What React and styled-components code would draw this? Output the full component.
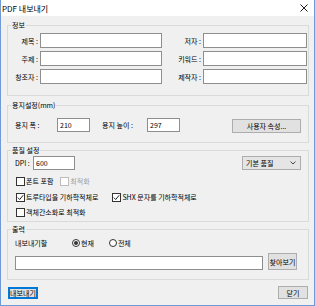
import React from "react";
import styled, { createGlobalStyle } from "styled-components";

const GlobalStyle = createGlobalStyle`
  html, body {
    margin: 0;
    padding: 0;
    background: #fff;
  }
  * {
    box-sizing: border-box;
  }
`;

const FONT = `"Noto Sans CJK KR", "Liberation Sans", sans-serif`;

const Window = styled.div`
  width: 315px;
  height: 306px;
  display: flex;
  flex-direction: column;
  border: 1px solid #6f9ad6;
  border-top: none;
  background: #f0f0f0;
  font-family: ${FONT};
  font-size: 7px;
  color: #000;
  overflow: hidden;
`;

const TitleBar = styled.div`
  height: 16px;
  flex: none;
  display: flex;
  align-items: center;
  justify-content: space-between;
  padding: 0 6px 0 1px;
  background: #fff;
  font-size: 8px;
`;

const Client = styled.div`
  flex: 1;
  display: flex;
  flex-direction: column;
  padding: 4px 5px 0 6px;
`;

const Group = styled.fieldset`
  margin: ${(p) => p.$top || 0}px 0 0 0;
  padding: ${(p) => p.$pad || "3px 2px 10px 0"};
  border: 1px solid #dadada;
  min-width: 0;
`;

const Legend = styled.legend`
  margin-left: 3px;
  padding: 0 1px;
  font-size: 7px;
  line-height: 10px;
`;

const InfoGrid = styled.div`
  display: grid;
  grid-template-columns: 30px 122px 37px 104px;
  column-gap: 2px;
  row-gap: 3px;
  align-items: center;
`;

const Label = styled.span`
  white-space: nowrap;
  text-align: ${(p) => (p.$right ? "right" : "left")};
  color: ${(p) => (p.$disabled ? "#a0a0a0" : "#000")};
`;

const Input = styled.input`
  width: ${(p) => p.$w}px;
  height: ${(p) => p.$h || 15}px;
  margin: 0;
  padding: 0 2px;
  border: 1px solid #8e8e8e;
  background: #fff;
  font-family: ${FONT};
  font-size: 7px;
  outline: none;
`;

const Row = styled.div`
  display: flex;
  align-items: center;
  gap: ${(p) => p.$gap || 0}px;
  margin-top: ${(p) => p.$mt || 0}px;
  padding-left: ${(p) => p.$pl ?? 7}px;
`;

const Spacer = styled.div`
  flex: 1;
`;

const Button = styled.button`
  height: ${(p) => p.$h || 14}px;
  width: ${(p) => p.$w}px;
  margin: 0;
  padding: 0;
  font-family: ${FONT};
  font-size: 7px;
  color: #000;
  background: #e1e1e1;
  border: 1px solid ${(p) => (p.$focus ? "#0078d7" : "#adadad")};
  box-shadow: ${(p) => (p.$focus ? "inset 0 0 0 1px #0078d7" : "none")};
`;

const Combo = styled.div`
  width: 59px;
  height: 14px;
  display: flex;
  align-items: center;
  justify-content: space-between;
  padding: 0 4px 0 3px;
  background: #e5e5e5;
  border: 1px solid #adadad;
`;

const Box = styled.span`
  width: 9px;
  height: 9px;
  flex: none;
  display: inline-flex;
  align-items: center;
  justify-content: center;
  background: #fff;
  border: 1px solid ${(p) => (p.$disabled ? "#bcbcbc" : "#333")};
`;

const Check = styled.label`
  display: inline-flex;
  align-items: center;
  gap: 1px;
  color: ${(p) => (p.$disabled ? "#a0a0a0" : "#000")};
`;

const Radio = styled.span`
  width: 8px;
  height: 8px;
  flex: none;
  border-radius: 50%;
  border: 1px solid #333;
  background: #fff;
  display: inline-flex;
  align-items: center;
  justify-content: center;
  &::after {
    content: "";
    width: 4px;
    height: 4px;
    border-radius: 50%;
    background: ${(p) => (p.$on ? "#333" : "transparent")};
  }
`;

const Footer = styled.div`
  display: flex;
  justify-content: space-between;
  align-items: center;
  padding: 6px 1px 0 1px;
`;

const CheckBox = ({ checked, disabled, children }) => (
  <Check $disabled={disabled}>
    <Box $disabled={disabled}>
      {checked && (
        <svg width="7" height="7" viewBox="0 0 7 7">
          <path d="M0.8 3.6 L2.7 5.5 L6.2 1.2" fill="none" stroke="#222" strokeWidth="1" />
        </svg>
      )}
    </Box>
    {children}
  </Check>
);

export default function App() {
  return (
    <>
      <GlobalStyle />
      <Window>
        <TitleBar>
          <span>PDF 내보내기</span>
          <svg width="8" height="8" viewBox="0 0 8 8">
            <path d="M0.5 0.5 L7.5 7.5 M7.5 0.5 L0.5 7.5" stroke="#222" strokeWidth="1" />
          </svg>
        </TitleBar>
        <Client>
          <Group $pad="3px 2px 11px 0">
            <Legend>정보</Legend>
            <InfoGrid>
              <Label $right>제목 :</Label>
              <Input $w={122} />
              <Label $right>저자 :</Label>
              <Input $w={104} />
              <Label $right>주제 :</Label>
              <Input $w={122} />
              <Label $right>키워드 :</Label>
              <Input $w={104} />
              <Label $right>창조자 :</Label>
              <Input $w={122} />
              <Label $right>제작자 :</Label>
              <Input $w={104} />
            </InfoGrid>
          </Group>

          <Group $top={4} $pad="6px 7px 9px 0">
            <Legend>용지설정(mm)</Legend>
            <Row>
              <Label style={{ width: 42 }}>용지 폭 :</Label>
              <Input $w={33} $h={14} defaultValue="210" />
              <Label style={{ width: 57, paddingLeft: 12 }}>용지 높이 :</Label>
              <Input $w={33} $h={14} defaultValue="297" />
              <Spacer />
              <Button $w={69} style={{ marginTop: 3 }}>사용자 속성...</Button>
            </Row>
          </Group>

          <Group $top={2} $pad="1px 7px 4px 0">
            <Legend>품질 설정</Legend>
            <Row>
              <Label style={{ width: 18 }}>DPI :</Label>
              <Input $w={42} $h={14} defaultValue="600" />
              <Spacer />
              <Combo>
                <span>기본 품질</span>
                <svg width="6" height="4" viewBox="0 0 6 4">
                  <path d="M0.5 0.5 L3 3 L5.5 0.5" fill="none" stroke="#333" strokeWidth="0.9" />
                </svg>
              </Combo>
            </Row>
            <Row $pl={8} $mt={6} $gap={7}>
              <CheckBox>폰트 포함</CheckBox>
              <CheckBox disabled>최적화</CheckBox>
            </Row>
            <Row $pl={8} $mt={6} $gap={14}>
              <CheckBox checked>트루타입을 기하학적체로</CheckBox>
              <CheckBox checked>SHX 문자를 기하학적체로</CheckBox>
            </Row>
            <Row $pl={8} $mt={5}>
              <CheckBox>객체간소화로 최적화</CheckBox>
            </Row>
          </Group>

          <Group $top={2} $pad="4px 11px 9px 0">
            <Legend>출력</Legend>
            <Row>
              <Label style={{ width: 57 }}>내보내기할</Label>
              <Check>
                <Radio $on />
                현재
              </Check>
              <Check style={{ marginLeft: 15 }}>
                <Radio />
                전체
              </Check>
            </Row>
            <Row $mt={5} $gap={5}>
              <Input $w={248} $h={14} style={{ marginTop: 2 }} />
              <Button $w={29} $h={17}>찾아보기</Button>
            </Row>
          </Group>

          <Footer>
            <Button $w={30} $h={12} $focus>내보내기</Button>
            <Button $w={30} $h={13}>닫기</Button>
          </Footer>
        </Client>
      </Window>
    </>
  );
}
